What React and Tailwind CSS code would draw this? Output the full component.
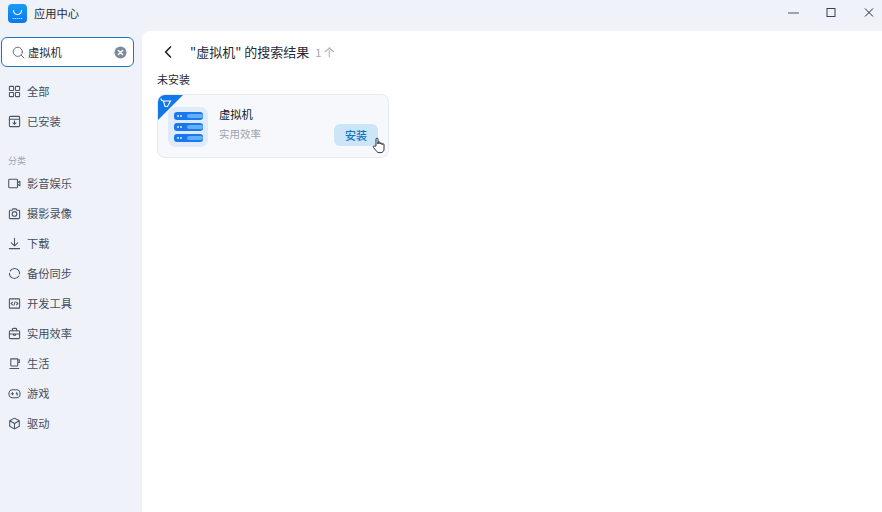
const font = { fontFamily: '"Noto Sans CJK SC", "Noto Sans", sans-serif' };

const Ic = ({ children }) => (
  <svg width="13" height="13" viewBox="0 0 14 14" fill="none" stroke="#4b5563" strokeWidth="1.15" strokeLinecap="round" strokeLinejoin="round" className="shrink-0">
    {children}
  </svg>
);

const icons = {
  all: <Ic><rect x="1.5" y="1.5" width="4.5" height="4.5" rx=".6" /><rect x="8" y="1.5" width="4.5" height="4.5" rx=".6" /><rect x="1.5" y="8" width="4.5" height="4.5" rx=".6" /><rect x="8" y="8" width="4.5" height="4.5" rx=".6" /></Ic>,
  installed: <Ic><rect x="1.5" y="1.5" width="11" height="11" rx="1" /><path d="M1.5 4.5h11M7 6.2v3.6M5.4 8.4 7 10l1.6-1.6" /></Ic>,
  video: <Ic><rect x="0.8" y="2.5" width="9.4" height="9" rx=".8" /><path d="m10.2 6.2 2.6-1.6v4.8l-2.6-1.6" /></Ic>,
  camera: <Ic><path d="M1.5 4.5a1 1 0 0 1 1-1h1.8l1-1.5h3.4l1 1.5h1.8a1 1 0 0 1 1 1v7a1 1 0 0 1-1 1h-9a1 1 0 0 1-1-1z" /><circle cx="7" cy="7.5" r="2.5" /></Ic>,
  download: <Ic><path d="M7 1.5v8M3.6 6.2 7 9.6l3.4-3.4M1.5 12.5h11" /></Ic>,
  sync: <Ic><path d="M2.4 4.2A5.5 5.5 0 0 1 11.8 4.4M11.7 9.7A5.5 5.5 0 0 1 2.2 9.6M12.4 7.2a5.5 5.5 0 0 0-.3-2.2M1.6 6.8a5.5 5.5 0 0 0 .3 2.2" /></Ic>,
  dev: <Ic><rect x="1.5" y="2" width="11" height="10" rx=".8" /><path d="M4.8 5.6 3.4 7l1.4 1.4M9.2 5.6 10.6 7 9.2 8.4M7.7 5.2 6.3 8.8" /></Ic>,
  tool: <Ic><rect x="1.5" y="4" width="11" height="8.5" rx="1" /><path d="M4.7 4V2.5a1 1 0 0 1 1-1h2.6a1 1 0 0 1 1 1V4M1.5 7.5h11M6 7.5v1.4h2V7.5" /></Ic>,
  life: <Ic><path d="M3 2h7.5v6.8a.8.8 0 0 1-.8.8H3.8a.8.8 0 0 1-.8-.8zM10.5 3h1.7v3h-1.7M2 12.3h9.5" /></Ic>,
  game: <Ic><rect x="1" y="3" width="12" height="8.5" rx="4" /><path d="M3.6 7.2h2.4M4.8 6v2.4" /><circle cx="9.4" cy="6.6" r=".35" /><circle cx="10" cy="8.2" r=".35" /></Ic>,
  box: <Ic><path d="M7 1.2 12.2 4v6L7 12.8 1.8 10V4zM1.8 4 7 7l5.2-3M7 7v5.8" /></Ic>,
};

const Item = ({ icon, label }) => (
  <div className="flex h-[30px] items-center gap-[6px] pl-[8px] text-[11.25px] text-[#454d5b]">
    {icons[icon]}
    <span>{label}</span>
  </div>
);

const cats = [
  ["video", "影音娱乐"],
  ["camera", "摄影录像"],
  ["download", "下载"],
  ["sync", "备份同步"],
  ["dev", "开发工具"],
  ["tool", "实用效率"],
  ["life", "生活"],
  ["game", "游戏"],
  ["box", "驱动"],
];

export default function App() {
  return (
    <div className="flex h-[512px] w-[882px] flex-col overflow-hidden bg-[#eff3f9]" style={font}>
      <header className="flex h-[31px] shrink-0 items-center pb-[5px] pl-[8px]">
        <svg width="19" height="19" viewBox="0 0 19 19" className="shrink-0">
          <defs>
            <linearGradient id="logo" x1="0" y1="0" x2="0" y2="1">
              <stop offset="0" stopColor="#1a9bf8" />
              <stop offset="1" stopColor="#0a78ee" />
            </linearGradient>
          </defs>
          <rect width="19" height="19" rx="4" fill="url(#logo)" />
          <path d="M5.5 6.5a4 4 0 0 0 8 0" fill="none" stroke="#fff" strokeWidth="1.2" strokeLinecap="round" />
          <path d="M4.5 14.5h10" stroke="#bfe0ff" strokeWidth="1" strokeDasharray="1.4 .7" />
        </svg>
        <span className="ml-[7px] text-[11.25px] text-[#1f2937]">应用中心</span>
        <div className="ml-auto flex items-center">
          <svg width="11" height="14" viewBox="0 0 11 14" className="mr-[27px]"><path d="M0 7h11" stroke="#4b5563" strokeWidth="1" /></svg>
          <svg width="10" height="14" viewBox="0 0 10 14" className="mr-[28px]"><rect x="1" y="2.5" width="8" height="8" fill="none" stroke="#374151" strokeWidth="1" /></svg>
          <svg width="10" height="14" viewBox="0 0 10 14" className="mr-[8px]"><path d="M1 2.5 9 10.5M9 2.5 1 10.5" stroke="#1f2937" strokeWidth="1" /></svg>
        </div>
      </header>
      <div className="flex min-h-0 flex-1">
        <aside className="w-[142px] shrink-0">
          <div className="pl-[1px] pt-[6px]">
            <div className="flex h-[30px] w-[133px] items-center rounded-[6px] border border-[#1b79b8] bg-white pl-[10px] pr-[6px]">
              <svg width="13" height="13" viewBox="0 0 13 13" fill="none" stroke="#6b7280" strokeWidth="1" strokeLinecap="round" className="shrink-0"><circle cx="5.8" cy="5.8" r="4.6" /><path d="m9.3 9.3 2.6 2.6" /></svg>
              <span className="ml-[3px] text-[11.25px] text-[#1f2937]">虚拟机</span>
              <svg width="13" height="13" viewBox="0 0 13 13" className="ml-auto"><circle cx="6.5" cy="6.5" r="6" fill="#7d8b9c" /><path d="m4.4 4.4 4.2 4.2M8.6 4.4 4.4 8.6" stroke="#fff" strokeWidth="1.4" strokeLinecap="round" /></svg>
            </div>
          </div>
          <nav className="mt-[9px]">
            <Item icon="all" label="全部" />
            <Item icon="installed" label="已安装" />
          </nav>
          <div className="ml-[8px] mt-[16px] h-[16px] text-[9px] leading-[17px] text-[#9ca3af]">分类</div>
          <nav>
            {cats.map(([i, l]) => <Item key={l} icon={i} label={l} />)}
          </nav>
        </aside>
        <main className="flex-1 rounded-tl-[8px] bg-white pl-[15px]">
          <div className="mt-[10px] flex h-[22px] items-center">
            <svg width="10" height="14" viewBox="0 0 10 14" fill="none" stroke="#1f2937" strokeWidth="1.7" strokeLinecap="round" strokeLinejoin="round" className="ml-[6px] shrink-0"><path d="M7.5 2 2.6 7l4.9 5" /></svg>
            <span className="ml-[17px] text-[13px] text-[#1f2937]">"虚拟机" 的搜索结果</span>
            <span className="ml-[6px] text-[11px] text-[#9ca3af]">1 个</span>
          </div>
          <div className="mt-[7px] h-[18px] text-[11px] leading-[18px] text-[#1f2937]">未安装</div>
          <div className="relative mt-[6px] flex h-[64px] w-[232px] items-center overflow-hidden rounded-[8px] border border-[#e5e9f0] bg-[#f6f8fb]">
            <div className="absolute left-[-1px] top-[-1px] h-[27px] w-[27px] bg-[#1278e8] [clip-path:polygon(0_0,100%_0,0_100%)]">
              <svg width="13" height="13" viewBox="0 0 13 13" fill="none" stroke="#fff" strokeWidth="1.1" className="absolute left-[3px] top-[3px]"><path d="M1 1.5c0 1.5 1 2.5 2.5 2.5h7L7.5 9.5H5L3.5 4" /></svg>
            </div>
            <div className="ml-[10px] mt-[2px] flex h-[40px] w-[40px] shrink-0 flex-col items-center justify-center gap-[3px] rounded-[8px] bg-[#dfeafa]">
              {[0, 1, 2].map((n) => (
                <div key={n} className="flex h-[8px] w-[29px] items-center gap-[1.5px] rounded-[3px] bg-[#1a78ee] pl-[3px]">
                  <span className="h-[2px] w-[2px] rounded-full bg-[#d9ecff]" />
                  <span className="h-[2px] w-[2px] rounded-full bg-[#d9ecff]" />
                  <span className="ml-[3px] h-[4px] w-[16px] rounded-[2px] bg-[#62aef7]" />
                </div>
              ))}
            </div>
            <div className="mb-[4px] ml-[11px] flex flex-col">
              <span className="text-[11.25px] leading-[18px] text-[#111827]">虚拟机</span>
              <span className="mt-[2px] text-[10.5px] leading-[18px] text-[#9ca3af]">实用效率</span>
            </div>
            <div className="absolute bottom-[11px] right-[10px] flex h-[22px] w-[44px] items-center justify-center rounded-[6px] bg-[#cde5f8] text-[11px] font-medium text-[#1272c4]">安装</div>
            <svg width="14" height="17" viewBox="0 0 14 17" className="absolute bottom-[3px] right-[2px]" fill="#fff" stroke="#111827" strokeWidth=".9" strokeLinejoin="round"><path d="M4 9V2.2a1 1 0 0 1 2 0V7V5.8a1 1 0 0 1 2 0V7a1 1 0 0 1 2 0v.7a1 1 0 0 1 2 0V12c0 2-1.2 3.6-3.2 3.6H7c-1.3 0-2-.7-2.7-1.7L1.5 10.6c-.9-1.2.6-2.3 1.5-1.3z" /></svg>
          </div>
        </main>
      </div>
    </div>
  );
}
